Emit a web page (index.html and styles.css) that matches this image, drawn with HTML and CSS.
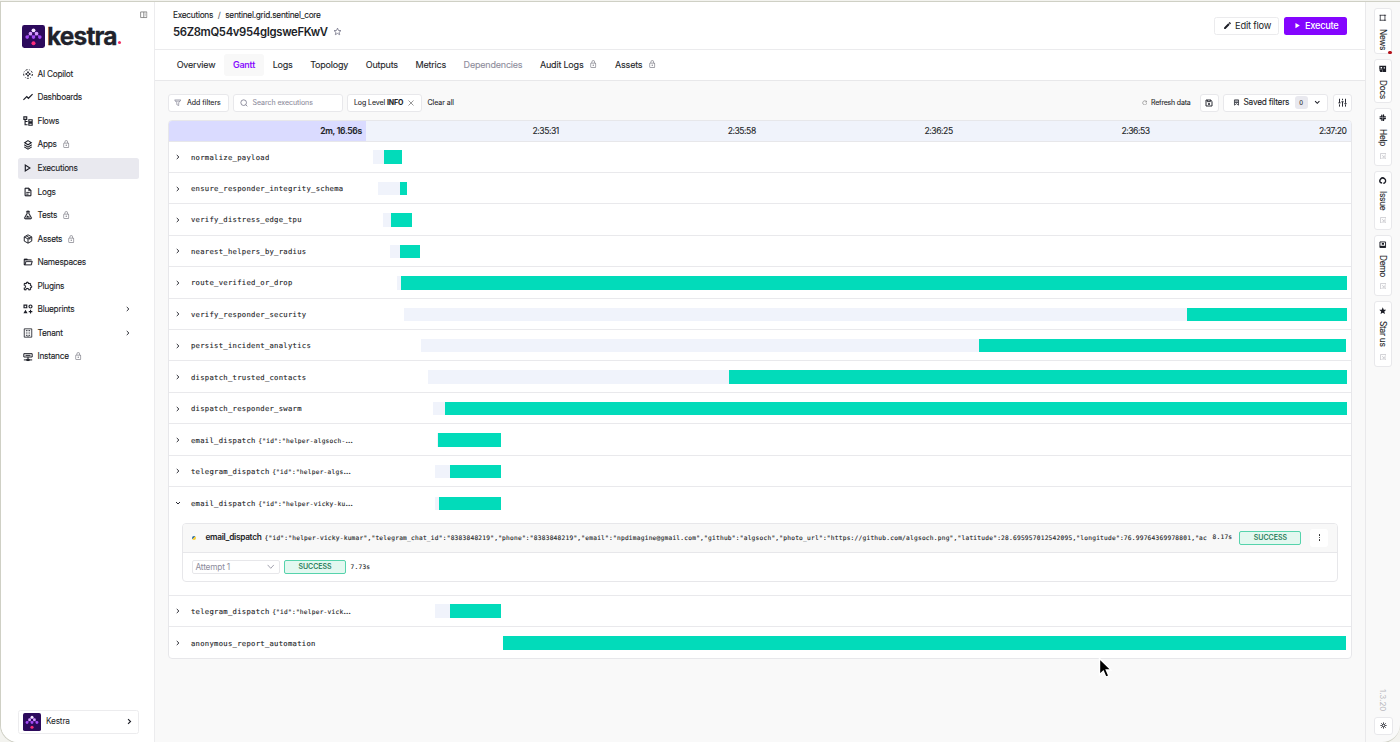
FILE: index.html
```html
<!DOCTYPE html>
<html lang="en">
<head>
<meta charset="utf-8">
<title>Kestra</title>
<link rel="stylesheet" href="styles.css">
</head>
<body>
<svg class="defs" aria-hidden="true">
  <symbol id="lock" viewBox="0 0 24 24"><path d="M12,17C10.89,17 10,16.1 10,15C10,13.89 10.89,13 12,13A2,2 0 0,1 14,15A2,2 0 0,1 12,17M18,20V10H6V20H18M18,8A2,2 0 0,1 20,10V20A2,2 0 0,1 18,22H6C4.89,22 4,21.1 4,20V10C4,8.89 4.89,8 6,8H7V6A5,5 0 0,1 12,1A5,5 0 0,1 17,6V8H18M12,3A3,3 0 0,0 9,6V8H15V6A3,3 0 0,0 12,3Z"/></symbol>
  <symbol id="copilot" viewBox="0 0 24 24"><path d="M12 6l1.8 4.2L18 12l-4.200 1.800L12 18l-1.800-4.200L6 12l4.200-1.800z" fill="none" stroke="currentColor" stroke-width="2.200"/><circle cx="12" cy="12" r="10.500" fill="none" stroke="currentColor" stroke-width="2.400" stroke-dasharray="5 3.500 2 3.500"/></symbol>
  <symbol id="trend" viewBox="0 0 24 24"><path d="M1 19l8-8 4 4 10-10" fill="none" stroke="currentColor" stroke-width="3"/></symbol>
  <symbol id="flows" viewBox="0 0 24 24"><path d="M2 2h7v6H2zM5 8v13h6M5 13h6M14 9h8v5h-8zM14 17h8v5h-8z" fill="none" stroke="currentColor" stroke-width="2.600"/></symbol>
  <symbol id="layers" viewBox="0 0 24 24"><path d="M12 1.500l8 5-8 5-8-5zM3 11.500l9 5.500 9-5.500M3 16.500L12 22l9-5.500" fill="none" stroke="currentColor" stroke-width="2.500"/></symbol>
  <symbol id="play" viewBox="0 0 24 24"><path d="M5.500 5v14l11-7z" fill="none" stroke="currentColor" stroke-width="2.800"/></symbol>
  <symbol id="file" viewBox="0 0 24 24"><path d="M6,2A2,2 0 0,0 4,4V20A2,2 0 0,0 6,22H18A2,2 0 0,0 20,20V8L14,2H6M6,4H13V9H18V20H6V4M8,12V14H16V12H8M8,16V18H13V16H8Z"/></symbol>
  <symbol id="flask" viewBox="0 0 24 24"><path d="M5,19A1,1 0 0,0 6,20H18A1,1 0 0,0 19,19C19,18.790 18.930,18.590 18.820,18.430L13,8.350V4H11V8.350L5.180,18.430C5.070,18.590 5,18.790 5,19M6,22A3,3 0 0,1 3,19C3,18.400 3.180,17.840 3.500,17.370L9,7.810V6A1,1 0 0,1 8,5V4A2,2 0 0,1 10,2H14A2,2 0 0,1 16,4V5A1,1 0 0,1 15,6V7.810L20.500,17.370C20.820,17.840 21,18.400 21,19A3,3 0 0,1 18,22H6M13,16L14.340,14.660L16.270,18H7.730L10.390,13.390L13,16Z"/></symbol>
  <symbol id="cube" viewBox="0 0 24 24"><path d="M12 2l9 5v10l-9 5-9-5V7zM3 7l9 5 9-5M12 12v10M7.500 4.500l9 5v4" fill="none" stroke="currentColor" stroke-width="2.300"/></symbol>
  <symbol id="folder" viewBox="0 0 24 24"><path d="M6.100,10L4,18V8H21A2,2 0 0,0 19,6H12L10,4H4A2,2 0 0,0 2,6V18A2,2 0 0,0 4,20H19C19.900,20 20.700,19.400 20.900,18.500L23.200,10H6.100M19,18H6L7.600,12H20.600L19,18Z"/></symbol>
  <symbol id="puzzle" viewBox="0 0 24 24"><path d="M22,13.500C22,15.260 20.700,16.720 19,16.960V20A2,2 0 0,1 17,22H13.200V21.700A2.700,2.700 0 0,0 10.500,19C9,19 7.800,20.210 7.800,21.700V22H4A2,2 0 0,1 2,20V16.200H2.300C3.790,16.200 5,15 5,13.500C5,12 3.790,10.800 2.300,10.800H2V7A2,2 0 0,1 4,5H7.040C7.280,3.300 8.740,2 10.500,2C12.260,2 13.720,3.300 13.960,5H17A2,2 0 0,1 19,7V10.040C20.700,10.280 22,11.740 22,13.500M17,15H18.500A1.500,1.500 0 0,0 20,13.500A1.500,1.500 0 0,0 18.500,12H17V7H12V5.500A1.500,1.500 0 0,0 10.500,4A1.500,1.500 0 0,0 9,5.500V7H4V9.120C5.760,9.800 7,11.500 7,13.500C7,15.500 5.750,17.200 4,17.880V20H6.120C6.800,18.250 8.500,17 10.500,17C12.500,17 14.200,18.250 14.880,20H17V15Z"/></symbol>
  <symbol id="shapes" viewBox="0 0 24 24"><path d="M2.500 2.500h6.500v6.500H2.500z" fill="none" stroke="currentColor" stroke-width="2.800"/><circle cx="18" cy="6" r="3.600" fill="none" stroke="currentColor" stroke-width="2.800"/><path d="M6 13.500l5 8.500H1zM16.800 14h2.600v3h3v2.600h-3v3h-2.600v-3h-3V17h3z"/></symbol>
  <symbol id="building" viewBox="0 0 24 24"><path d="M3 2h18v20H3z" fill="none" stroke="currentColor" stroke-width="2"/><path d="M7 5h2v2H7zM11 5h2v2h-2zM15 5h2v2h-2zM7 9h2v2H7zM11 9h2v2h-2zM15 9h2v2h-2zM7 13h2v2H7zM11 13h2v2h-2zM15 13h2v2h-2zM7 17h2v2H7zM11 17h2v4h-2zM15 17h2v2h-2z"/></symbol>
  <symbol id="server" viewBox="0 0 24 24"><path d="M2 4h20v8H2zM6 8h12M12 12v6M2 19h20M9 17.500h6v3H9z" fill="none" stroke="currentColor" stroke-width="2.400"/></symbol>
  <symbol id="right" viewBox="0 0 24 24"><path d="M7 4l8.500 8L7 20" fill="none" stroke="currentColor" stroke-width="3.800"/></symbol>
  <symbol id="down" viewBox="0 0 24 24"><path d="M4 8l8 8 8-8" fill="none" stroke="currentColor" stroke-width="3.800"/></symbol>
  <symbol id="thindown" viewBox="0 0 24 24"><path d="M2 6l10 11L22 6" fill="none" stroke="currentColor" stroke-width="2.600"/></symbol>
  <symbol id="columns" viewBox="0 0 24 24"><path d="M2 3h20v18H2zM12 3v18" fill="none" stroke="currentColor" stroke-width="2.600"/><path d="M15 7h4M15 11h4M15 15h4" stroke="currentColor" stroke-width="1.200"/></symbol>
  <symbol id="star" viewBox="0 0 24 24"><path d="M12 3l2.600 6.200 6.700.5-5.100 4.400 1.600 6.500L12 17.100l-5.800 3.500 1.600-6.500-5.100-4.400 6.700-.5z" fill="none" stroke="currentColor" stroke-width="2.200"/></symbol>
  <symbol id="starfull" viewBox="0 0 24 24"><path d="M12 1l3.200 7.400 8 .7-6.100 5.200 1.900 7.900-7-4.200-7 4.200 1.900-7.900L.8 9.100l8-.7z"/></symbol>
  <symbol id="pencil" viewBox="0 0 24 24"><path d="M20.710,7.040C21.100,6.650 21.100,6 20.710,5.630L18.370,3.290C18,2.900 17.350,2.900 16.960,3.290L15.120,5.120L18.870,8.870M3,17.250V21H6.750L17.810,9.930L14.060,6.180L3,17.250Z"/></symbol>
  <symbol id="playfull" viewBox="0 0 24 24"><path d="M5 3v18l15-9z"/></symbol>
  <symbol id="funnel" viewBox="0 0 24 24"><path d="M2 3h20l-7 9v9l-6-3v-6zM5 7h14" fill="none" stroke="currentColor" stroke-width="2"/></symbol>
  <symbol id="search" viewBox="0 0 24 24"><path d="M17 17l5 5" stroke="currentColor" stroke-width="2.400"/><circle cx="11" cy="11" r="8.500" fill="none" stroke="currentColor" stroke-width="2.400"/></symbol>
  <symbol id="close" viewBox="0 0 24 24"><path d="M2 2l20 20M22 2L2 22" stroke="currentColor" stroke-width="3"/></symbol>
  <symbol id="refresh" viewBox="0 0 24 24"><path d="M20 8a9 9 0 1 0 1 6M21 3v6h-6" fill="none" stroke="currentColor" stroke-width="2.600"/></symbol>
  <symbol id="save" viewBox="0 0 24 24"><path d="M3 3h14l4 4v14H3zM7 3v5h9V3" fill="none" stroke="currentColor" stroke-width="2.800"/><circle cx="12" cy="15" r="3"/></symbol>
  <symbol id="bookmark" viewBox="0 0 24 24"><path d="M5 3h14v18l-7-5-7 5zM6 7h12M6 12h12" fill="none" stroke="currentColor" stroke-width="2.600"/></symbol>
  <symbol id="sliders" viewBox="0 0 24 24"><path d="M4 2v11M4 17v6M12 2v4M12 10v13M20 2v11M20 17v6M1 13h6M9 10h6M17 15h6" fill="none" stroke="currentColor" stroke-width="2.500"/></symbol>
  <symbol id="external" viewBox="0 0 24 24"><path d="M2 2h20v20H2zM8 8l8 8M9 16h7V9" fill="none" stroke="currentColor" stroke-width="2.200"/></symbol>
  <symbol id="note" viewBox="0 0 24 24"><path d="M2 4h17v16H2M17 4h6M17 20h6M4 3v18" fill="none" stroke="currentColor" stroke-width="2.400"/></symbol>
  <symbol id="docs" viewBox="0 0 24 24"><path fill-rule="evenodd" d="M1 2h22v20H12v-7H1zM5 6v5h5V6zM1 16h10v6H4zM15 7v4h4V7z"/></symbol>
  <symbol id="slack" viewBox="0 0 24 24"><path d="M9 3.500v6M3.500 9.500h5M14.500 3v6.500h6M9.500 14.500h-6M9.500 14.500v6M14.500 14.500h6M14.500 14.500v6M9 9l6 6M15 9l-6 6" fill="none" stroke="currentColor" stroke-width="4" stroke-linecap="round"/><circle cx="12" cy="12" r="2" fill="#fff"/></symbol>
  <symbol id="github" viewBox="0 0 24 24"><path d="M6 19a9 9 0 1 1 13-1M19 18l-5 3M6 19l4-1" fill="none" stroke="currentColor" stroke-width="4.600"/></symbol>
  <symbol id="demo" viewBox="0 0 24 24"><path d="M3 3h18v18H3z" fill="none" stroke="currentColor" stroke-width="3"/><path d="M3 15h18v6H3zM9 6h7v6H9z"/></symbol>
  <symbol id="gear" viewBox="0 0 24 24"><path d="M12 1v22M1 12h22M4 4l16 16M20 4L4 20" stroke="currentColor" stroke-width="2.400"/><circle cx="12" cy="12" r="4.500" fill="#fff" stroke="currentColor" stroke-width="2.500"/></symbol>
  <symbol id="mark" viewBox="0 0 24 24"><rect width="24" height="24" rx="2.500" fill="#2c0a5c"/><g stroke="#a44bf5" stroke-width="1"><path d="M12 6L5 13M12 6l7 7M9 9l3 4 3-4" fill="none"/></g><circle cx="12" cy="5.600" r="2" fill="#f3e3ff"/><circle cx="8.800" cy="9" r="1.900" fill="#d59bff"/><circle cx="15.200" cy="9" r="1.900" fill="#d59bff"/><circle cx="5.400" cy="12.600" r="1.900" fill="#a44bf5"/><circle cx="12" cy="12.600" r="1.900" fill="#a44bf5"/><circle cx="18.600" cy="12.600" r="1.900" fill="#a44bf5"/><circle cx="12" cy="19" r="2.100" fill="#fb2c7c"/></symbol>
</svg>
<div class="frame">
  <aside class="sidebar">
    <div class="collapse"><svg class="i9"><use href="#columns"/></svg></div>
    <div class="logo"><svg class="mark"><use href="#mark"/></svg><span class="word">kestra</span><i class="dot"></i></div>
    <nav class="menu">
      <a class="item"><svg><use href="#copilot"/></svg><span>AI Copilot</span></a>
      <a class="item"><svg><use href="#trend"/></svg><span>Dashboards</span></a>
      <a class="item"><svg><use href="#flows"/></svg><span>Flows</span></a>
      <a class="item"><svg><use href="#layers"/></svg><span>Apps</span><svg class="lk"><use href="#lock"/></svg></a>
      <a class="item on"><svg><use href="#play"/></svg><span>Executions</span></a>
      <a class="item solid"><svg><use href="#file"/></svg><span>Logs</span></a>
      <a class="item solid"><svg><use href="#flask"/></svg><span>Tests</span><svg class="lk"><use href="#lock"/></svg></a>
      <a class="item"><svg><use href="#cube"/></svg><span>Assets</span><svg class="lk"><use href="#lock"/></svg></a>
      <a class="item solid"><svg><use href="#folder"/></svg><span>Namespaces</span></a>
      <a class="item solid"><svg><use href="#puzzle"/></svg><span>Plugins</span></a>
      <a class="item"><svg><use href="#shapes"/></svg><span>Blueprints</span><svg class="arr"><use href="#right"/></svg></a>
      <a class="item"><svg><use href="#building"/></svg><span>Tenant</span><svg class="arr"><use href="#right"/></svg></a>
      <a class="item"><svg><use href="#server"/></svg><span>Instance</span><svg class="lk"><use href="#lock"/></svg></a>
    </nav>
    <div class="tenant"><svg class="tmark"><use href="#mark"/></svg><span>Kestra</span><svg class="arr"><use href="#right"/></svg></div>
  </aside>
  <main class="main">
    <header class="head">
      <div class="titles">
        <div class="crumbs"><span>Executions</span><span class="slash">/</span><span>sentinel.grid.sentinel_core</span></div>
        <div class="title"><h1>56Z8mQ54v954gIgsweFKwV</h1><svg class="i9"><use href="#star"/></svg></div>
      </div>
      <div class="actions">
        <button class="btn edit"><svg><use href="#pencil"/></svg><span>Edit flow</span></button>
        <button class="btn exec"><svg><use href="#playfull"/></svg><span>Execute</span></button>
      </div>
    </header>
    <nav class="tabs">
      <a class="tab">Overview</a><a class="tab on">Gantt</a><a class="tab">Logs</a><a class="tab">Topology</a><a class="tab">Outputs</a><a class="tab">Metrics</a><a class="tab off">Dependencies</a><a class="tab">Audit Logs<svg><use href="#lock"/></svg></a><a class="tab">Assets<svg><use href="#lock"/></svg></a>
    </nav>
    <section class="content">
      <div class="filters">
        <button class="chip add"><svg><use href="#funnel"/></svg><span>Add filters</span></button>
        <div class="chip search"><svg><use href="#search"/></svg><span>Search executions</span></div>
        <div class="chip level"><span>Log Level <b>INFO</b></span><svg><use href="#close"/></svg></div>
        <span class="clear">Clear all</span>
        <span class="refresh"><svg><use href="#refresh"/></svg><span>Refresh data</span></span>
        <button class="chip sq save"><svg><use href="#save"/></svg></button>
        <button class="chip saved"><svg><use href="#bookmark"/></svg><span>Saved filters</span><span class="count">0</span><svg><use href="#down"/></svg></button>
        <button class="chip sq"><svg><use href="#sliders"/></svg></button>
      </div>
      <div class="gantt">
        <div class="scale"><b class="total">2m, 16.56s</b><span>2:35:31</span><span>2:35:58</span><span>2:36:25</span><span>2:36:53</span><span>2:37:20</span></div>
        <div class="row"><svg class="tog"><use href="#right"/></svg><div class="task">normalize_payload</div><div class="track"><i class="wait" style="margin-left:7px;width:11px"></i><i class="run" style="width:18px"></i></div></div>
        <div class="row"><svg class="tog"><use href="#right"/></svg><div class="task">ensure_responder_integrity_schema</div><div class="track"><i class="wait" style="margin-left:12px;width:22px"></i><i class="run" style="width:7px"></i></div></div>
        <div class="row"><svg class="tog"><use href="#right"/></svg><div class="task">verify_distress_edge_tpu</div><div class="track"><i class="wait" style="margin-left:17px;width:7.500px"></i><i class="run" style="width:21.500px"></i></div></div>
        <div class="row"><svg class="tog"><use href="#right"/></svg><div class="task">nearest_helpers_by_radius</div><div class="track"><i class="wait" style="margin-left:24px;width:10px"></i><i class="run" style="width:19.700px"></i></div></div>
        <div class="row"><svg class="tog"><use href="#right"/></svg><div class="task">route_verified_or_drop</div><div class="track"><i class="wait" style="margin-left:31px;width:4px"></i><i class="run" style="width:945.500px"></i></div></div>
        <div class="row"><svg class="tog"><use href="#right"/></svg><div class="task">verify_responder_security</div><div class="track"><i class="wait" style="margin-left:38px;width:783px"></i><i class="run" style="width:159.500px"></i></div></div>
        <div class="row"><svg class="tog"><use href="#right"/></svg><div class="task">persist_incident_analytics</div><div class="track"><i class="wait" style="margin-left:54.700px;width:558px"></i><i class="run" style="width:367.800px"></i></div></div>
        <div class="row"><svg class="tog"><use href="#right"/></svg><div class="task">dispatch_trusted_contacts</div><div class="track"><i class="wait" style="margin-left:61.500px;width:301.500px"></i><i class="run" style="width:617.500px"></i></div></div>
        <div class="row"><svg class="tog"><use href="#right"/></svg><div class="task">dispatch_responder_swarm</div><div class="track"><i class="wait" style="margin-left:67px;width:12px"></i><i class="run" style="width:901.500px"></i></div></div>
        <div class="row"><svg class="tog"><use href="#right"/></svg><div class="task">email_dispatch <small>{"id":"helper-algsoch-<em>…</em></small></div><div class="track"><i class="wait" style="margin-left:70.500px;width:1.500px"></i><i class="run" style="width:62.700px"></i></div></div>
        <div class="row"><svg class="tog"><use href="#right"/></svg><div class="task">telegram_dispatch <small>{"id":"helper-algs<em>…</em></small></div><div class="track"><i class="wait" style="margin-left:69px;width:15px"></i><i class="run" style="width:50.700px"></i></div></div>
        <div class="row open"><svg class="tog"><use href="#down"/></svg><div class="task">email_dispatch <small>{"id":"helper-vicky-ku<em>…</em></small></div><div class="track"><i class="wait" style="margin-left:69px;width:3.500px"></i><i class="run" style="width:62.200px"></i></div></div>
        <div class="detail">
          <div class="card">
            <div class="card-head"><i class="py"></i><b>email_dispatch</b><code>{"id":"helper-vicky-kumar","telegram_chat_id":"8383848219","phone":"8383848219","email":"npdimagine@gmail.com","github":"algsoch","photo_url":"https://github.com/algsoch.png","latitude":28.695957012542095,"longitude":76.99764369978801,"ac</code><span class="dur">8.17s</span><span class="status">SUCCESS</span><button class="more"><i></i><i></i><i></i></button></div>
            <div class="card-body"><div class="select"><span>Attempt 1</span><svg><use href="#thindown"/></svg></div><span class="status">SUCCESS</span><span class="dur">7.73s</span></div>
          </div>
        </div>
        <div class="row"><svg class="tog"><use href="#right"/></svg><div class="task">telegram_dispatch <small>{"id":"helper-vick<em>…</em></small></div><div class="track"><i class="wait" style="margin-left:69px;width:14.500px"></i><i class="run" style="width:51.200px"></i></div></div>
        <div class="row last"><svg class="tog"><use href="#right"/></svg><div class="task">anonymous_report_automation</div><div class="track"><i class="run" style="margin-left:137.300px;width:843.200px"></i></div></div>
      </div>
    </section>
  </main>
  <aside class="rail">
    <a class="vt news"><svg><use href="#note"/></svg><span>News</span><i class="badge"></i></a>
    <a class="vt docs"><svg><use href="#docs"/></svg><span>Docs</span></a>
    <a class="vt help"><svg><use href="#slack"/></svg><span>Help</span><svg class="ext"><use href="#external"/></svg></a>
    <a class="vt issue"><svg><use href="#github"/></svg><span>Issue</span><svg class="ext"><use href="#external"/></svg></a>
    <a class="vt demo"><svg><use href="#demo"/></svg><span>Demo</span><svg class="ext"><use href="#external"/></svg></a>
    <a class="vt starus"><svg><use href="#starfull"/></svg><span>Star us</span><svg class="ext"><use href="#external"/></svg></a>
    <span class="version">1.3.20</span>
    <button class="theme"><svg><use href="#gear"/></svg></button>
  </aside>
</div>
<svg class="cursor" viewBox="0 0 14 22"><path d="M1.500 1.500v16.200l3.800-3.500 2.600 6 3-1.300-2.600-5.900h5z" fill="#000" stroke="#fff" stroke-width="1.400"/></svg>
</body>
</html>
```
FILE: styles.css
```css
* { box-sizing: border-box; }
body {
  margin: 0;
  width: 1400px;
  height: 742px;
  overflow: hidden;
  background: #f3f3ef;
  color: #1c1e27;
  font-family: Inter, "Liberation Sans", sans-serif;
  font-size: 8.300px;
  line-height: 1;
  padding-top: 1px;
}
svg { fill: currentColor; flex: none; display: block; }
button { font: inherit; color: inherit; margin: 0; padding: 0; letter-spacing: inherit; }
.defs { display: none; }
.i9 { width: 9px; height: 9px; }
.frame {
  display: flex;
  width: 1400px;
  height: 742px;
  border-top: 1px solid #cfd0c5;
  border-left: 1px solid #cfd0c5;
  border-bottom: 1px solid #cfd0c5;
  border-radius: 0 0 18px 18px;
  overflow: hidden;
  background: #f9f9f9;
}

/* Sidebar */
.sidebar {
  width: 154px;
  flex: none;
  background: #fff;
  border-right: 1px solid #ececee;
  display: flex;
  flex-direction: column;
}
.collapse { padding: 9px 6.500px 0 0; display: flex; justify-content: flex-end; color: #777; }
.collapse svg { width: 7.500px; height: 7.500px; }
.logo { display: flex; align-items: center; height: 24px; margin: 5.500px 0 0 20.500px; }
.mark { width: 23px; height: 23px; }
.word { font-weight: 700; font-size: 24.500px; letter-spacing: -0.850px; margin: 0 0 0 2.500px; color: #20222b; -webkit-text-stroke: 0.300px #20222b; }
.dot { width: 3px; height: 3px; border-radius: 50%; background: #f02e63; margin: 13px 0 0 1px; }
.menu { display: flex; flex-direction: column; gap: 2.660px; margin: 15.500px 0 0 17px; width: 121px; -webkit-text-stroke: 0.100px; }
.item { display: flex; align-items: center; height: 20.900px; padding-left: 4.500px; border-radius: 2.500px; }
.item svg { width: 10px; height: 10px; }
.item.solid svg:first-child { stroke: currentColor; stroke-width: 0.500px; }
.item span { margin-left: 5px; letter-spacing: -0.270px; }
.item .lk { width: 8.500px; height: 8.500px; margin-left: 5px; color: #85858e; }
.item .arr { width: 6px; height: 6px; margin: 0 8px 0 auto; }
.item.on { background: #e9e9ef; }
.tenant {
  display: flex; align-items: center;
  width: 121px; height: 24px;
  margin: auto 0 8.500px 16.500px;
  border: 1px solid #ececee; border-radius: 2.500px;
  padding-left: 4px;
}
.tmark { width: 18px; height: 18px; }
.tenant span { margin-left: 5.500px; letter-spacing: -0.200px; }
.tenant .arr { width: 7px; height: 7px; margin: 0 5px 0 auto; }

/* Main column */
.main { width: 1210px; flex: none; }
.head {
  height: 48px; background: #fff; border-bottom: 1px solid #ebebed;
  display: flex; justify-content: space-between;
  padding: 8px 18px 0 18px;
}
.crumbs { display: flex; font-size: 8.300px; line-height: 10px; letter-spacing: -0.270px; margin-top: -0.500px; -webkit-text-stroke: 0.100px; }
.slash { margin: 0 4.700px; color: #666; }
.title { display: flex; align-items: center; margin-top: 5px; }
h1 { margin: 0; font-size: 11.300px; line-height: 14px; font-weight: 600; letter-spacing: -0.330px; }
.title svg { margin-left: 5px; color: #77778a; }
.actions { display: flex; gap: 5px; padding-top: 6.500px; }
.btn { height: 18px; border-radius: 2.500px; display: flex; align-items: center; font-size: 9.300px; }
.edit { width: 65px; border: 1px solid #ebebed; background: #fff; padding-left: 8px; letter-spacing: -0.200px; }
.edit svg { width: 9px; height: 9px; margin-right: 3px; }
.exec { width: 63px; border: 0; background: #8405ff; color: #fff; padding-left: 10px; font-weight: 500; letter-spacing: -0.300px; }
.exec svg { width: 7px; height: 7px; margin-right: 4px; }
.tabs {
  height: 31px; background: #fff; border-bottom: 1px solid #e8e8ea;
  display: flex; align-items: center; padding: 0 0 1px 12.800px; font-size: 9px; letter-spacing: -0.200px;
  -webkit-text-stroke: 0.100px;
}
.tab { display: flex; align-items: center; height: 22px; padding: 0 8.700px 0 8.900px; border-radius: 3px; }
.tab.on { background: #f8f8f8; color: #8405ff; font-weight: 500; }
.tab.off { color: #8e8d9c; }
.tab svg { width: 8.500px; height: 8.500px; margin-left: 5.500px; color: #85858e; }
.content { padding: 12.500px 13.500px 0 13px; }
.filters { display: flex; align-items: center; height: 18px; font-size: 7px; -webkit-text-stroke: 0.080px; letter-spacing: -0.040px; }
.chip {
  height: 18px; border: 1px solid #e8e8eb; border-radius: 3px; background: #fff;
  display: flex; align-items: center;
}
.add { width: 60.500px; padding-left: 5px; margin-right: 4.500px; }
.add svg { width: 7.500px; height: 7.500px; color: #77778a; margin-right: 5.500px; }
.search { width: 110px; padding-left: 5.500px; margin-right: 4px; color: #8e8d9c; }
.search svg { width: 8px; height: 8px; margin-right: 5px; color: #77778a; }
.level { width: 74.500px; padding-left: 6px; margin-right: 6px; letter-spacing: -0.100px; }
.level svg { width: 6px; height: 6px; margin-left: 4.500px; color: #777; }
.refresh { display: flex; align-items: center; margin-left: auto; margin-right: 9px; letter-spacing: -0.200px; }
.refresh svg { width: 5.500px; height: 5.500px; margin-right: 3.500px; color: #777; }
.sq { width: 19px; justify-content: center; }
.sq svg { width: 9px; height: 9px; }
.save { margin-right: 4.500px; }
.save svg { width: 8px; height: 8px; }
.saved { width: 105px; margin-right: 4.500px; font-size: 8.300px; padding-left: 8.500px; letter-spacing: -0.240px; }
.saved svg { width: 6.500px; height: 6.500px; }
.saved svg:first-child { width: 7px; height: 7px; margin-right: 4px; }
.saved .count { width: 13px; height: 13px; border-radius: 3px; background: #e9e9ef; font-size: 6px; display: flex; align-items: center; justify-content: center; margin: 0 6px 0 5.500px; letter-spacing: 0; }

/* Gantt */
.gantt {
  margin-top: 8.500px; width: 1183.500px; background: #fff;
  border: 1px solid #e7e7ea; border-radius: 4px; overflow: hidden;
}
.scale { display: flex; height: 20.500px; background: #f0f3fb; border-bottom: 1px solid #e7e7ea; font-size: 8.600px; letter-spacing: -0.450px; -webkit-text-stroke: 0.100px; }
.scale > * { width: 197px; padding: 1px 4px 0 0; display: flex; align-items: center; justify-content: flex-end; }
.scale .total { background: #dadbff; font-weight: 600; font-size: 8.500px; letter-spacing: -0.280px; }
.row { display: flex; align-items: center; height: 31.430px; border-bottom: 1px solid #e9e9ec; padding-top: 0.900px; }
.row.open { border-bottom: 0; }
.row.last { border-bottom: 0; }
.tog { width: 6px; height: 6px; margin-left: 5.500px; }
.task {
  width: 185.500px; flex: none; padding-left: 10.500px; white-space: pre;
  font-family: "DejaVu Sans Mono", "Liberation Mono", monospace; font-size: 7.200px; letter-spacing: 0.290px;
  -webkit-text-stroke: 0.120px;
}
.task small { font-size: 6.200px; letter-spacing: 0.235px; margin-left: -2px; }
.task em { font-family: Inter, sans-serif; font-style: normal; font-size: 8.500px; letter-spacing: 0; }
.track { display: flex; height: 13.500px; }
.track i { display: block; height: 13.500px; }
.wait { background: #f0f3fb; }
.run { background: #02dbba; }
.detail { padding: 4px 13px 0; height: 77px; border-bottom: 1px solid #e9e9ec; }
.card { height: 59px; border: 1px solid #e7e7ea; border-bottom-width: 1.500px; border-radius: 4px; width: 1156px; overflow: hidden; }
.card-head { display: flex; align-items: center; height: 29px; background: #f8f8f8; border-bottom: 1px solid #e7e7ea; padding-left: 9px; }
.py { width: 4px; height: 4px; border-radius: 50%; background: linear-gradient(135deg, #3572a5 50%, #f5cf3b 50%); }
.card-head b { font-size: 8.300px; font-weight: 600; margin-left: 9.500px; width: 59px; letter-spacing: -0.300px; }
code, .dur { font-family: "DejaVu Sans Mono", "Liberation Mono", monospace; font-size: 6.200px; letter-spacing: 0.235px; white-space: pre; -webkit-text-stroke: 0.120px; }
code { width: 948px; overflow: hidden; line-height: 9px; }
.status {
  width: 62px; height: 14px; border: 1px solid #56d3ac; border-radius: 2px; background: #e3f8f0; color: #1d7a55;
  font-size: 7px; display: flex; align-items: center; justify-content: center; font-weight: 500; -webkit-text-stroke: 0.100px;
}
.card-head .status { margin-left: 7px; }
.more { width: 18px; height: 18px; border: 0; border-radius: 3px; background: #fff; margin-left: 9px; display: flex; flex-direction: column; align-items: center; justify-content: center; gap: 1px; }
.more i { width: 1.500px; height: 1.500px; background: #222; border-radius: 50%; }
.card-body { display: flex; align-items: center; height: 28.500px; padding-left: 8.500px; }
.select { width: 88.500px; height: 13.500px; border: 1px solid #e7e7ea; border-radius: 2px; display: flex; align-items: center; color: #8e8d9c; font-size: 8.300px; letter-spacing: -0.200px; padding: 0 4.500px 0 3px; justify-content: space-between; margin-right: 4px; }
.select svg { width: 7.500px; height: 7.500px; }
.card-body .dur { margin-left: 4.500px; }

/* Right rail */
.rail { width: 35px; flex: none; border-left: 1px solid #e9e9eb; display: flex; flex-direction: column; align-items: center; gap: 5px; padding-top: 6px; }
.vt {
  position: relative; width: 17.500px; writing-mode: vertical-rl; display: flex; align-items: center;
  border: 1px solid #e8e8eb; border-radius: 3px; background: #fff; padding-top: 5px; font-size: 8.300px; letter-spacing: -0.280px; flex: none;
  -webkit-text-stroke: 0.100px;
}
.vt svg { width: 7.500px; height: 7.500px; margin-bottom: 7px; }
.vt .ext { color: #b5b5bb; margin: auto 0 5.500px; width: 6.500px; height: 6.500px; }
.news { height: 46px; }
.docs { height: 44px; }
.help { height: 57.500px; }
.issue { height: 59px; }
.demo { height: 61px; }
.starus { height: 66px; }
.badge { position: absolute; right: -1px; bottom: -1px; width: 3.500px; height: 3.500px; border-radius: 50%; background: #b5121b; }
.version { writing-mode: vertical-rl; margin-top: auto; color: #b9b9c0; font-size: 8px; }
.theme { width: 19px; height: 18px; border: 1px solid #e8e8eb; border-radius: 3px; background: #fff; display: flex; align-items: center; justify-content: center; margin-bottom: 7.500px; }
.theme svg { width: 7px; height: 7px; }
.cursor { position: absolute; left: 1098px; top: 657px; width: 14px; height: 22px; }
```
